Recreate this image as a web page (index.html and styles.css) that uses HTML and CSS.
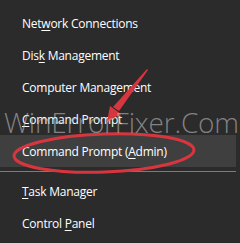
FILE: index.html
```html
<!DOCTYPE html>
<html>
<head>
<meta charset="utf-8">
<link rel="stylesheet" href="styles.css">
</head>
<body>
<div class="menu">
  <div class="item"><span>Net<u>w</u>ork Connections</span></div>
  <div class="item"><span>Dis<u>k</u> Management</span></div>
  <div class="item"><span>Computer Mana<u>g</u>ement</span></div>
  <div class="item"><span><u>C</u>ommand Prompt</span></div>
  <div class="item hover"><span>Command Prompt (<u>A</u>dmin)</span></div>
  <div class="sep"></div>
  <div class="item"><span><u>T</u>ask Manager</span></div>
  <div class="item"><span>Control <u>P</u>anel</span></div>
</div>
<svg class="annot" width="240" height="243" viewBox="0 0 240 243">
  <ellipse cx="104" cy="153" rx="90" ry="19" fill="none" stroke="#d8363f" stroke-width="3" transform="rotate(-2 104 153)"/>
  <polygon points="147,69 148,70 119,111 113,107" fill="#d8363f"/>
  <polygon points="107,122 110,106 121,114" fill="#d8363f"/>
</svg>
<div class="watermark">WinErrorFixer.Com</div>
</body>
</html>
```
FILE: styles.css
```css
html, body {
  margin: 0;
  padding: 0;
  background: #2b2b2b;
  width: 240px;
  height: 243px;
  overflow: hidden;
}
.menu {
  padding-top: 7px;
  width: 236px;
  font-family: "Open Sans", "Noto Sans", sans-serif;
  font-size: 12px;
  letter-spacing: -0.25px;
  color: #ffffff;
}
.item {
  height: 32px;
  display: flex;
  align-items: center;
  padding-left: 22px;
  white-space: nowrap;
}
.item u {
  text-decoration-thickness: 1px;
  text-underline-offset: 2px;
}
.hover {
  background: #3f3f3f;
}
.sep {
  height: 8px;
  display: flex;
  align-items: center;
}
.sep::before {
  content: "";
  display: block;
  width: 100%;
  height: 1px;
  background: #7c7c7c;
}
.annot {
  position: absolute;
  left: 0;
  top: 0;
}
.watermark {
  position: absolute;
  left: 4px;
  top: 103px;
  font-family: "Open Sans", "Noto Sans", sans-serif;
  font-weight: 300;
  font-size: 28px;
  color: rgba(190, 190, 190, 0.6);
  white-space: nowrap;
  letter-spacing: -0.2px;
}
```
